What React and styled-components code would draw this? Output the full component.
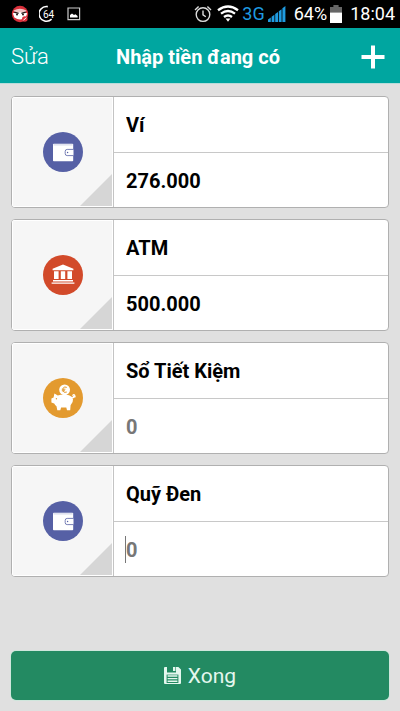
import React, { useState } from "react";
import styled, { createGlobalStyle } from "styled-components";

const initialAccounts = [
  { id: 1, icon: "wallet", name: "Ví", amount: "276.000" },
  { id: 2, icon: "bank", name: "ATM", amount: "500.000" },
  { id: 3, icon: "piggy", name: "Sổ Tiết Kiệm", amount: "" },
  { id: 4, icon: "wallet", name: "Quỹ Đen", amount: "", active: true },
];

const iconColors = {
  wallet: "#5660a5",
  bank: "#d24a2a",
  piggy: "#e39a2f",
};

const WalletGlyph = () => (
  <svg width="40" height="40" viewBox="0 0 40 40">
    <path d="M10 12.5q0-.8.8-.8h18.6q.8 0 .8.8v16q0 .8-.8.8H10.8q-.8 0-.8-.8z" fill="#fff" />
    <path d="M10.6 12.9h19" stroke="#a9aed4" strokeWidth=".6" />
    <path d="M30.4 17.4h-6.2q-2 0-2 2v2.2q0 2 2 2h6.2" fill="#fff" stroke="#5660a5" strokeWidth=".8" />
    <circle cx="24.6" cy="20.5" r=".7" fill="#5660a5" />
  </svg>
);

const BankGlyph = () => (
  <svg width="40" height="40" viewBox="0 0 40 40" fill="#fff">
    <path d="M20 9.5l10.4 4.2v1.5H9.6v-1.5z" />
    <path d="M11 16.2h4.6V24h-4.6zM17.8 16.2h4.4V24h-4.4zM24.4 16.2H29V24h-4.6z" />
    <path d="M10 25h20v1.6H10zM8.6 27.4h22.8v1.4H8.6z" />
  </svg>
);

const PiggyGlyph = () => (
  <svg width="40" height="40" viewBox="0 0 40 40">
    <circle cx="21.6" cy="11.8" r="5.4" fill="#fff" />
    <path
      d="M23.8 9.4q-3-1.4-3.7 1v2.8q.8 2 3.7.8M18.8 11.2h3.6M18.8 12.8h3.2"
      fill="none"
      stroke="#e39a2f"
      strokeWidth="1"
    />
    <path
      d="M11.4 15.4l3.4 2.2q5.4-2 11.2-.4 3.4 1.1 4 4 .3 3.4-2.4 6l-.4 5h-3.2l-.7-2.8h-5.2l-.8 2.8h-3l-.8-4q-1.6-1.1-2.3-2.8l-2.8-.9v-4.1l2.2-1z"
      fill="#fff"
    />
    <path
      d="M28.6 20q3.4-.6 3.2-2.7-1-1.4-2 0 .2 2 2.8 1.4"
      fill="none"
      stroke="#fff"
      strokeWidth="1.2"
    />
    <circle cx="13.4" cy="20.8" r=".7" fill="#e39a2f" />
  </svg>
);

const glyphs = { wallet: WalletGlyph, bank: BankGlyph, piggy: PiggyGlyph };

const StatusBar = () => (
  <Status>
    <StatusGroup $gap={10}>
      <svg width="18" height="18" viewBox="0 0 18 18">
        <circle cx="9" cy="9" r="8.2" fill="#d9303b" />
        <path d="M2.6 5.4Q9 2 15.4 5.4L14 8H4z" fill="#f2c6c6" />
        <path d="M1.8 8.2q7.2-2 14.4 0l-1.6 4.4q-5.4 4-11.2 0z" fill="#fff" />
        <path d="M3.2 7.2l4.4 1.2M14.8 7.2l-4.4 1.2" stroke="#251717" strokeWidth="1.2" />
        <circle cx="6" cy="9.4" r="1" fill="#251717" />
        <circle cx="12" cy="9.4" r="1" fill="#251717" />
        <circle cx="13.8" cy="14" r="2.8" fill="#d9303b" />
        <path d="M12.4 15.4l2.8-2.8" stroke="#fff" />
      </svg>
      <Speed>
        <svg width="16" height="18" viewBox="0 0 16 18">
          <path d="M8.8 1.6A7.4 7.4 0 1 0 12.6 14.2" fill="none" stroke="#fff" strokeWidth="1.6" />
        </svg>
        <SpeedText>64</SpeedText>
      </Speed>
      <Picture width="14" height="14" viewBox="0 0 14 14">
        <path d="M1 1h11.6v11.6H1z" fill="none" stroke="#ccc" strokeWidth="1.2" />
        <path d="M3 10.6V8l2-1.4L7 8l1.4-.8 2.2 1.8v1.6z" fill="#fff" />
      </Picture>
    </StatusGroup>
    <StatusGroup $gap={3}>
      <svg width="20" height="18" viewBox="0 0 20 18" fill="none" stroke="#ddd" strokeWidth="1.4">
        <circle cx="9" cy="9.6" r="6.8" />
        <path d="M9 5.4v4.4l2.8 2M1 5l3.6-3.4M17 5l-3.6-3.4" />
      </svg>
      <svg width="22" height="18" viewBox="0 0 22 18" fill="none" stroke="#fff" strokeWidth="2.4">
        <path d="M1 5.2q10-7.4 20 0M4 8.6q7-5.2 14 0M7 12q4-3 8 0" />
        <path d="M8.6 13.6h4.8L11 16.8z" fill="#fff" stroke="none" />
      </svg>
      <Network>3G</Network>
      <svg width="18" height="18" viewBox="0 0 18 18" fill="#1f9be0">
        <path d="M0 17v-2.4l2.8-2V17zM3.6 17v-5.2l2.8-2V17zM7.2 17V9L10 7v10zM10.8 17V6.2l2.8-2V17zM14.4 17V3.2L17.4 1v16z" />
      </svg>
      <StatusText $before={5}>64%</StatusText>
      <svg width="12" height="18" viewBox="0 0 12 18">
        <path d="M3.4 0h5.2v2H12v6H0V2h3.4z" fill="#666" />
        <path d="M0 7.6h12V18H0z" fill="#fff" />
      </svg>
      <StatusText $before={5}>18:04</StatusText>
    </StatusGroup>
  </Status>
);

const AccountCard = ({ el, onChange }) => {
  const Glyph = glyphs[el.icon];

  return (
    <Card>
      <IconButton type="button" aria-label={`Biểu tượng ${el.name}`}>
        <Circle $color={iconColors[el.icon]}>
          <Glyph />
        </Circle>
      </IconButton>
      <Fields>
        <Field>
          <Input
            aria-label="Tên tài khoản"
            value={el.name}
            onChange={(e) => onChange(el.id, "name", e.target.value)}
          />
        </Field>
        <Field $active={el.active}>
          <Input
            aria-label={`Số tiền ${el.name}`}
            inputMode="numeric"
            placeholder="0"
            value={el.amount}
            onChange={(e) => onChange(el.id, "amount", e.target.value)}
          />
        </Field>
      </Fields>
    </Card>
  );
};

const App = () => {
  const [accounts, setAccounts] = useState(initialAccounts);

  const changeHandler = (id, key, value) => {
    setAccounts((prev) =>
      prev.map((el) => (el.id === id ? { ...el, [key]: value } : el))
    );
  };

  return (
    <Page>
      <GlobalStyle />
      <StatusBar />
      <Header>
        <EditButton type="button">Sửa</EditButton>
        <Title>Nhập tiền đang có</Title>
        <AddButton type="button" aria-label="Thêm">
          <svg width="24" height="24" viewBox="0 0 24 24">
            <path d="M12 0.5v23M0.5 12h23" stroke="#fff" strokeWidth="4" />
          </svg>
        </AddButton>
      </Header>
      <List>
        {accounts.map((el) => (
          <AccountCard key={el.id} el={el} onChange={changeHandler} />
        ))}
      </List>
      <Footer>
        <DoneButton type="button">
          <svg width="17" height="17" viewBox="0 0 17 17">
            <path d="M1 0h2v5.6h9V0h2.4L17 2.6V16q0 1-1 1H1q-1 0-1-1V1q0-1 1-1z" fill="#e4f7ee" />
            <path d="M9 0h2.4v4H9z" fill="#e4f7ee" />
            <path d="M2.6 7.6h11.8V16H2.6z" fill="#238a62" />
            <path d="M3.6 9h9.8M3.6 11.6h9.8M3.6 14.2h9.8" stroke="#e4f7ee" strokeWidth="1.4" />
          </svg>
          Xong
        </DoneButton>
      </Footer>
    </Page>
  );
};

export default App;

const GlobalStyle = createGlobalStyle`
  * {
    box-sizing: border-box;
  }
  body {
    margin: 0;
    background: #e0e0e0;
    font-family: Roboto, "Noto Sans", sans-serif;
  }
  button,
  input {
    font-family: inherit;
  }
  svg {
    display: block;
    flex-shrink: 0;
  }
`;

const Page = styled.div`
  display: flex;
  flex-direction: column;
  min-height: 100vh;
`;

const Status = styled.div`
  display: flex;
  justify-content: space-between;
  align-items: center;
  height: 28px;
  padding: 0 5px 0 11px;
  background: #000000;
`;

const StatusGroup = styled.div`
  display: flex;
  align-items: center;
  gap: ${({ $gap }) => $gap}px;
`;

const Speed = styled.div`
  display: flex;
  align-items: center;
`;

const SpeedText = styled.span`
  margin-left: -12px;
  font-size: 10px;
  color: #ffffff;
`;

const Picture = styled.svg`
  margin-left: 3px;
`;

const StatusText = styled.span`
  margin-left: ${({ $before }) => $before}px;
  font-size: 18px;
  line-height: 28px;
  color: #ffffff;
`;

const Network = styled(StatusText)`
  margin-left: 0;
  color: #1f9be0;
`;

const Header = styled.header`
  display: grid;
  grid-template-columns: 1fr auto 1fr;
  align-items: center;
  height: 56px;
  padding: 2px 15px 0 11px;
  background: #00a6a0;
  border-bottom: 1px solid #b8dcda;
`;

const EditButton = styled.button`
  justify-self: start;
  padding: 0;
  border: none;
  background: none;
  font-size: 22px;
  font-weight: 300;
  color: #ffffff;
`;

const Title = styled.h1`
  margin: 0;
  font-size: 20px;
  font-weight: 700;
  color: #ffffff;
`;

const AddButton = styled.button`
  justify-self: end;
  padding: 0;
  border: none;
  background: none;
`;

const List = styled.main`
  flex: 1;
  display: flex;
  flex-direction: column;
  gap: 11px;
  padding: 12px 11px;
`;

const Card = styled.section`
  display: flex;
  height: 112px;
  border: 1px solid #b0b0b0;
  border-radius: 4px;
  background: #ffffff;
  overflow: hidden;
`;

const IconButton = styled.button`
  display: flex;
  justify-content: center;
  align-items: center;
  width: 101px;
  padding: 0;
  border: 1px solid #ffffff;
  background: linear-gradient(135deg, transparent 49%, #d6d6d6 51%) right bottom /
    32px 32px no-repeat #f6f6f6;
`;

const Circle = styled.span`
  display: flex;
  width: 40px;
  height: 40px;
  border-radius: 50%;
  background-color: ${({ $color }) => $color};
`;

const Fields = styled.div`
  flex: 1;
  display: flex;
  flex-direction: column;
  border-left: 1px solid #c4c4c4;
`;

const Field = styled.div`
  position: relative;
  flex: 1;
  display: flex;

  & + & {
    border-top: 1px solid #c8c8c8;
  }

  &::before {
    content: "";
    display: ${({ $active }) => ($active ? "block" : "none")};
    position: absolute;
    left: 11px;
    top: 14px;
    width: 1px;
    height: 27px;
    background: #777777;
  }
`;

const Input = styled.input`
  width: 100%;
  min-width: 0;
  padding: 2px 12px 0;
  border: none;
  outline: none;
  background: transparent;
  font-size: 20px;
  font-weight: 700;
  color: #000000;

  &::placeholder {
    color: #777777;
    opacity: 1;
  }
`;

const Footer = styled.footer`
  padding: 0 11px 11px;
`;

const DoneButton = styled.button`
  display: flex;
  justify-content: center;
  align-items: center;
  gap: 7px;
  width: 100%;
  height: 49px;
  border: none;
  border-radius: 5px;
  background: #238a62;
  box-shadow: 0 0 0 1px #cfe6dc;
  font-size: 21px;
  color: #e4f7ee;
`;
